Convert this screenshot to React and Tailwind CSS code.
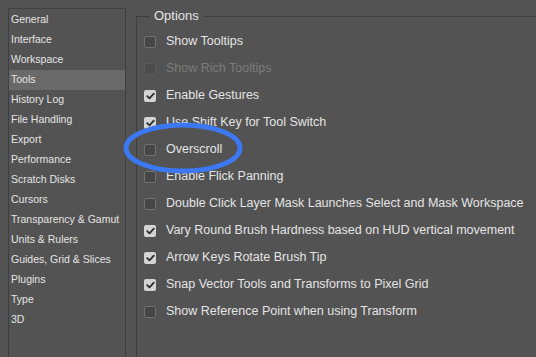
import React from "react";

const sidebar = [
  "General",
  "Interface",
  "Workspace",
  "Tools",
  "History Log",
  "File Handling",
  "Export",
  "Performance",
  "Scratch Disks",
  "Cursors",
  "Transparency & Gamut",
  "Units & Rulers",
  "Guides, Grid & Slices",
  "Plugins",
  "Type",
  "3D",
];

const options = [
  { label: "Show Tooltips", checked: false },
  { label: "Show Rich Tooltips", checked: false, disabled: true },
  { label: "Enable Gestures", checked: true },
  { label: "Use Shift Key for Tool Switch", checked: true },
  { label: "Overscroll", checked: false },
  { label: "Enable Flick Panning", checked: false },
  { label: "Double Click Layer Mask Launches Select and Mask Workspace", checked: false },
  { label: "Vary Round Brush Hardness based on HUD vertical movement", checked: true },
  { label: "Arrow Keys Rotate Brush Tip", checked: true },
  { label: "Snap Vector Tools and Transforms to Pixel Grid", checked: true },
  { label: "Show Reference Point when using Transform", checked: false },
];

function Box({ checked, disabled }) {
  if (checked) {
    return (
      <div className="w-[12px] h-[12px] rounded-[2px] bg-[#d4d4d4] flex items-center justify-center shrink-0">
        <svg width="9" height="8" viewBox="0 0 9 8">
          <path d="M1.2 4.2 L3.5 6.4 L7.8 1.6" fill="none" stroke="#2e2e2e" strokeWidth="1.8" strokeLinecap="round" strokeLinejoin="round" />
        </svg>
      </div>
    );
  }
  return (
    <div
      className={
        disabled
          ? "w-[12px] h-[12px] rounded-[2px] bg-[#4c4c4c] border border-[#5a5a5a] shrink-0"
          : "w-[12px] h-[12px] rounded-[2px] bg-[#464646] border border-[#727272] shrink-0"
      }
    />
  );
}

export default function App() {
  return (
    <div
      className="relative w-[536px] h-[357px] bg-[#535353] overflow-hidden flex text-[#e4e4e4]"
      style={{ fontFamily: '"Liberation Sans", Arial, Helvetica, sans-serif' }}
    >
      <div className="ml-[8px] mt-[8px] w-[118px] h-[400px] border border-[#3f3f3f] shrink-0 flex flex-col pt-[1px]">
        {sidebar.map((s) => (
          <div
            key={s}
            className={
              "h-[20px] flex items-center pl-[2px] text-[10.5px] " +
              (s === "Tools" ? "bg-[#696969]" : "")
            }
          >
            {s}
          </div>
        ))}
      </div>
      <fieldset className="ml-[10px] mt-[8px] w-[420px] h-[420px] border border-[#3f3f3f] shrink-0">
        <legend className="ml-[13px] px-[4px] text-[13px] leading-[16px] text-[#e4e4e4]">Options</legend>
        <div className="flex flex-col pl-[7px] pt-[4px]">
          {options.map((o) => (
            <div key={o.label} className="h-[27px] flex items-center gap-[10px]">
              <Box checked={o.checked} disabled={o.disabled} />
              <span
                className={
                  "text-[12.5px] whitespace-nowrap " +
                  (o.disabled ? "text-[#7b7b7b]" : "text-[#e4e4e4]")
                }
              >
                {o.label}
              </span>
            </div>
          ))}
        </div>
      </fieldset>
      <svg
        className="absolute left-[122px] top-[121px] pointer-events-none"
        width="122"
        height="54"
        viewBox="0 0 122 54"
      >
        <ellipse cx="61" cy="27" rx="57" ry="23" fill="none" stroke="#3b78f2" strokeWidth="5" />
      </svg>
    </div>
  );
}
